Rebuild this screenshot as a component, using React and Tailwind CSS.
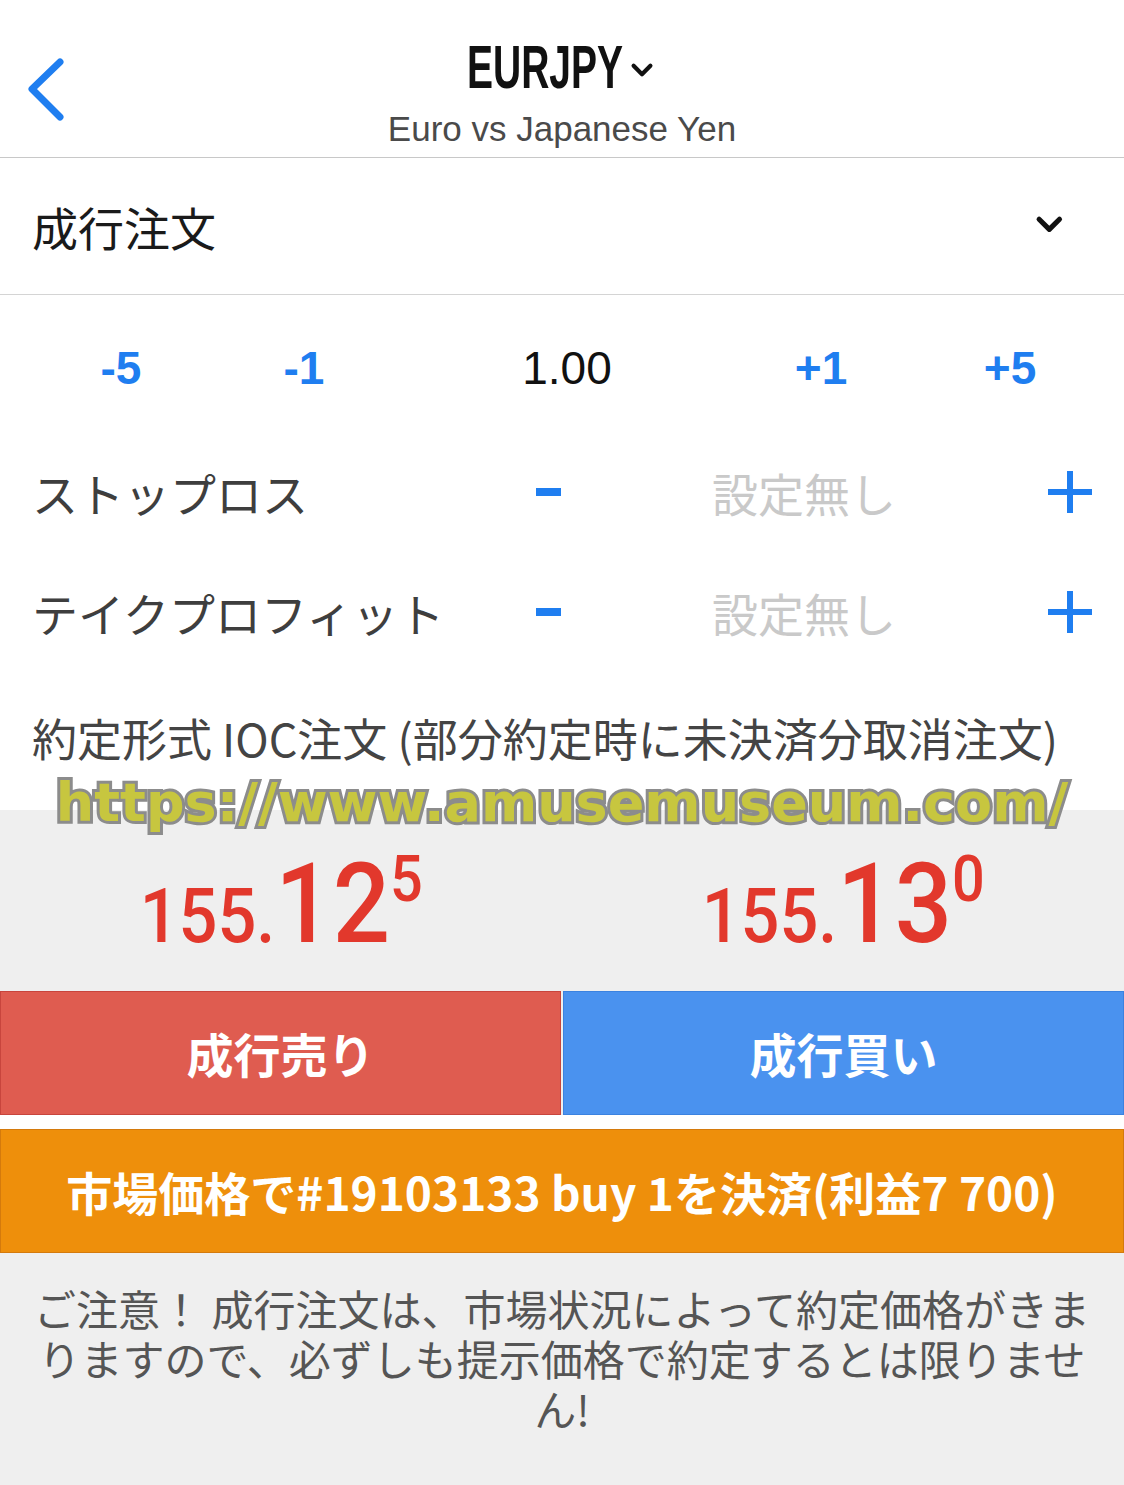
import { useState } from "react";

const sans = "font-['Liberation_Sans','Noto_Sans_CJK_JP',sans-serif]";
const jp = "font-['Noto_Sans_CJK_JP','Liberation_Sans',sans-serif]";

const Chevron = ({ className, points, width = 6, box = "0 0 40 40" }) => (
  <svg className={className} viewBox={box} fill="none">
    <polyline points={points} stroke="currentColor" strokeWidth={width} strokeLinecap="round" strokeLinejoin="round" />
  </svg>
);

const PlusIcon = () => (
  <svg className="h-[42px] w-[44px] text-[#1f7ef0]" viewBox="0 0 44 42">
    <rect x="0" y="18" width="44" height="6" fill="currentColor" />
    <rect x="19" y="0" width="6" height="42" fill="currentColor" />
  </svg>
);

const Price = ({ head, big, sup }) => (
  <div className="flex justify-center text-[112px] leading-none">
    <span className="inline-block origin-center scale-x-[0.9] whitespace-nowrap font-['Roboto','Liberation_Sans',sans-serif] font-medium text-[#e2382c]">
      <span className="text-[76px]">{head}</span>
      <span className="text-[112px]">{big}</span>
      <span className="align-top text-[64px]">{sup}</span>
    </span>
  </div>
);

const LevelRow = ({ label }) => (
  <div className="flex h-[120px] items-center">
    <div className={`w-[516px] pl-[32px] text-[46px] text-[#3e3e3e] ${jp}`}>{label}</div>
    <div className="flex w-[64px] justify-center">
      <div className="h-[8px] w-[25px] bg-[#1f7ef0]" />
    </div>
    <div className={`ml-[132px] text-[46px] text-[#c9c9c9] ${jp}`}>設定無し</div>
    <div className="ml-auto mr-[32px]">
      <PlusIcon />
    </div>
  </div>
);

export default function App() {
  const [volume] = useState("1.00");

  return (
    <div className="relative w-[1124px] min-h-[1485px] bg-[#efefef]">
      <header className="relative h-[158px] border-b border-[#c8c8c8] bg-white">
        <Chevron
          className="absolute left-[24px] top-[55px] h-[70px] w-[44px] text-[#1f7ef0]"
          box="0 0 44 70"
          points="36,7 8,34 36,62"
          width={7}
        />
        <div className="flex flex-col items-center pt-[37px]">
          <div className="flex items-center">
            <div className="flex w-[154px] justify-center">
              <span className={`inline-block origin-center scale-x-[0.64] whitespace-nowrap text-[61px] font-bold leading-none text-[#111] ${sans}`}>
                EURJPY
              </span>
            </div>
            <Chevron className="ml-[6px] mt-[4px] h-[28px] w-[28px] text-[#111]" points="8,14 20,26 32,14" width={6} />
          </div>
          <div className={`mt-[13px] text-[35px] leading-none text-[#4a4a4a] ${sans}`}>Euro vs Japanese Yen</div>
        </div>
      </header>

      <div className="flex h-[137px] items-center border-b border-[#d4d4d4] bg-white pl-[32px] pr-[56px]">
        <span className={`text-[46px] text-[#1a1a1a] ${jp}`}>成行注文</span>
        <Chevron className="ml-auto h-[34px] w-[34px] text-[#111]" points="6,12 18,24 30,12" width={6} />
      </div>

      <div className="bg-white">
        <div className={`flex h-[137px] items-center pt-[9px] text-[46px] ${sans}`}>
          <span className="ml-[71px] w-[100px] text-center font-bold text-[#1f7ef0]">-5</span>
          <span className="ml-[83px] w-[100px] text-center font-bold text-[#1f7ef0]">-1</span>
          <span className="ml-[163px] w-[100px] text-center text-[#111]">{volume}</span>
          <span className="ml-[154px] w-[100px] text-center font-bold text-[#1f7ef0]">+1</span>
          <span className="ml-[89px] w-[100px] text-center font-bold text-[#1f7ef0]">+5</span>
        </div>

        <LevelRow label="ストップロス" />
        <LevelRow label="テイクプロフィット" />

        <div className="h-[138px] pl-[32px] pt-[36px]">
          <p className={`whitespace-nowrap text-[45px] leading-[60px] text-[#444] ${jp}`}>
            約定形式 IOC注文 (部分約定時に未決済分取消注文)
          </p>
        </div>
      </div>

      <div className="h-[181px] bg-[#efefef] pt-[38px]">
        <div className="grid grid-cols-2">
          <Price head="155." big="12" sup="5" />
          <Price head="155." big="13" sup="0" />
        </div>
      </div>

      <div className="flex h-[124px] gap-[2px] bg-[#efefef]">
        <button className={`flex flex-1 items-center justify-center border border-[#c8453d] bg-[#df5c50] text-[47px] font-bold text-white ${jp}`}>
          成行売り
        </button>
        <button className={`flex flex-1 items-center justify-center border border-[#3b82e0] bg-[#4a92ef] text-[47px] font-bold text-white ${jp}`}>
          成行買い
        </button>
      </div>

      <div className="h-[14px] bg-white" />

      <button className={`flex h-[124px] w-full items-center justify-center border border-[#d47a0c] bg-[#ee8f0b] text-[46px] font-bold text-white ${jp}`}>
        市場価格で#19103133 buy 1を決済(利益7 700)
      </button>

      <div className={`px-[20px] pt-[30px] text-center text-[42px] leading-[50px] text-[#555] ${jp}`}>
        <p className="whitespace-nowrap">ご注意！ 成行注文は、市場状況によって約定価格がきま</p>
        <p className="whitespace-nowrap">りますので、必ずしも提示価格で約定するとは限りませ</p>
        <p className="whitespace-nowrap">ん!</p>
      </div>

      <div className="pointer-events-none absolute left-0 top-[762px] w-full text-center">
        <span className={`whitespace-nowrap font-['DejaVu_Sans',sans-serif] text-[54px] font-bold text-[#c7c63f] [-webkit-text-stroke:6px_#8c8c8c] [paint-order:stroke_fill]`}>
          https://www.amusemuseum.com/
        </span>
      </div>
    </div>
  );
}
